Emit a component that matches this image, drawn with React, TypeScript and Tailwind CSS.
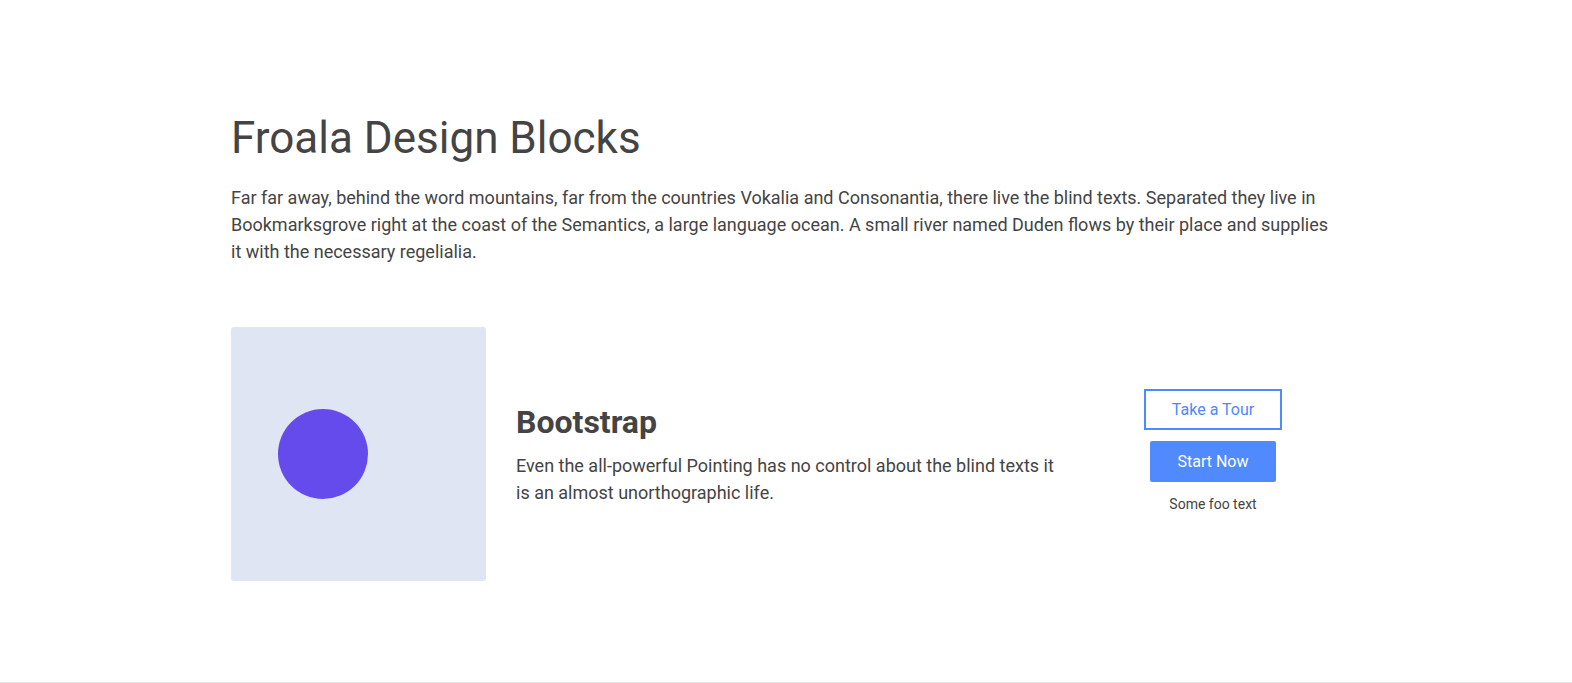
export default function App() {
  return (
    <div className="min-h-[683px] bg-white" style={{ fontFamily: "Roboto, 'Liberation Sans', sans-serif" }}>
      <section className="border-b border-[#e8e8e8] pt-[112px] pb-[101px]">
        <div className="mx-auto w-[1110px] text-[#444444]">
          <h1 className="text-[44px] leading-[1.2] font-normal">Froala Design Blocks</h1>
          <p className="mt-[19px] text-[18px] leading-[27px]">
            Far far away, behind the word mountains, far from the countries Vokalia and Consonantia, there live the blind texts. Separated they live in Bookmarksgrove right at the coast of the Semantics, a large language ocean. A small river named Duden flows by their place and supplies it with the necessary regelialia.
          </p>
          <div className="mt-[62px] flex items-center">
            <div className="flex h-[254px] w-[255px] shrink-0 items-center rounded-[3px] bg-[#dfe5f2] pl-[47px]">
              <div className="h-[90px] w-[90px] rounded-full bg-[#654bec]" />
            </div>
            <div className="ml-[30px] w-[545px] pt-[2px]">
              <h3 className="text-[32px] leading-[1.15] font-bold">Bootstrap</h3>
              <p className="mt-[11px] text-[18px] leading-[27px]">
                Even the all-powerful Pointing has no control about the blind texts it is an almost unorthographic life.
              </p>
            </div>
            <div className="ml-auto flex w-[256px] flex-col items-center pb-[4px]">
              <button className="h-[41px] w-[138px] border-2 border-[#4f88ff] bg-white text-[16px] text-[#4f88ff]">Take a Tour</button>
              <button className="mt-[11px] h-[41px] w-[126px] rounded-[2px] bg-[#5189ff] text-[16px] text-white">Start Now</button>
              <p className="mt-[12px] text-[14px] leading-[20px] text-[#444444]">Some foo text</p>
            </div>
          </div>
        </div>
      </section>
    </div>
  );
}
